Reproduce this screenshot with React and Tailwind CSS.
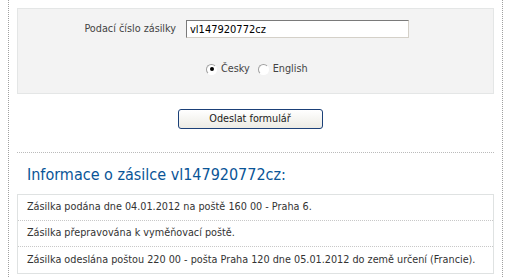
export default function App() {
  const rows = [
    "Zásilka podána dne 04.01.2012 na poště 160 00 - Praha 6.",
    "Zásilka přepravována k vyměňovací poště.",
    "Zásilka odeslána poštou 220 00 - pošta Praha 120 dne 05.01.2012 do země určení (Francie).",
  ];

  return (
    <div
      className="w-[510px] h-[277px] bg-white overflow-hidden"
      style={{ fontFamily: '"DejaVu Sans Condensed", "DejaVu Sans", sans-serif' }}
    >
      <div className="ml-[8px] w-[495px] h-full border-x border-dotted border-[#a0a0a0] pt-[8px] px-[8px] text-[10.75px] text-[#333]">
        {/* form box */}
        <div className="h-[86px] bg-[#f3f3f3] border border-[#e4e6e6] pt-[11px]">
          <div className="flex items-center">
            <label className="w-[168px] text-right pr-[10px] text-[#444]">Podací číslo zásilky</label>
            <input
              defaultValue="vl147920772cz"
              className="w-[223px] h-[18px] bg-white border border-[#7a7a7a] border-b-[#d4d0c8] border-r-[#d4d0c8] px-[3px] text-[11px] text-black outline-none"
              style={{ fontFamily: '"DejaVu Sans Condensed", sans-serif' }}
            />
          </div>
          <div className="flex items-center mt-[23px] pl-[188px] gap-[4px] text-[#444]">
            <span className="w-[11px] h-[11px] rounded-full border border-[#a0a0a0] border-b-white border-r-white bg-white flex items-center justify-center">
              <span className="w-[4px] h-[4px] rounded-full bg-black" />
            </span>
            <span>Česky</span>
            <span className="w-[11px] h-[11px] rounded-full border border-[#a0a0a0] border-b-white border-r-white bg-white ml-[4px]" />
            <span>English</span>
          </div>
        </div>

        {/* submit */}
        <div className="flex justify-center mt-[15px] pr-[11px]">
          <button className="w-[145px] h-[20px] rounded-[3px] border border-[#1b4078] bg-gradient-to-b from-white to-[#ecebe4] text-[10.75px] text-[#222] font-normal">
            Odeslat formulář
          </button>
        </div>

        <div className="mt-[23px] border-t border-dotted border-[#bbb]" />

        <h2 className="mt-[10px] ml-[10px] text-[16px] leading-[24px] text-[#0a5597]">
          Informace o zásilce vl147920772cz:
        </h2>

        <div className="mt-[7px] border border-[#dfe2e2]">
          {rows.map((r, i) => (
            <div
              key={i}
              className={`h-[26px] flex items-center pl-[9px] text-[#333] ${
                i < rows.length - 1 ? "border-b border-dotted border-[#c8c8c8]" : ""
              }`}
            >
              {r}
            </div>
          ))}
        </div>
      </div>
    </div>
  );
}
